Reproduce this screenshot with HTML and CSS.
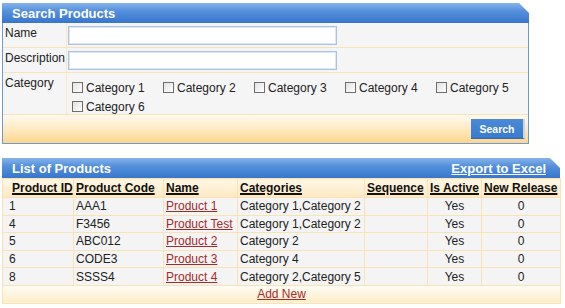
FILE: index.html
```html
<!DOCTYPE html>
<html>
<head>
<meta charset="utf-8">
<link rel="stylesheet" href="styles.css">
</head>
<body>
<div class="page">
  <section class="panel search-panel">
    <div class="panel-head"><span class="title">Search Products</span></div>
    <div class="panel-body">
      <div class="frow row-name">
        <div class="flabel">Name</div>
        <div class="ffield"><span class="tinput"></span></div>
      </div>
      <div class="frow row-desc">
        <div class="flabel">Description</div>
        <div class="ffield"><span class="tinput"></span></div>
      </div>
      <div class="frow row-cat">
        <div class="flabel">Category</div>
        <div class="ffield cats">
          <span class="cat"><span class="box"></span>Category 1</span>
          <span class="cat"><span class="box"></span>Category 2</span>
          <span class="cat"><span class="box"></span>Category 3</span>
          <span class="cat"><span class="box"></span>Category 4</span>
          <span class="cat"><span class="box"></span>Category 5</span>
          <span class="cat"><span class="box"></span>Category 6</span>
        </div>
      </div>
      <div class="ffoot"><span class="btn">Search</span></div>
    </div>
  </section>

  <section class="panel list-panel">
    <div class="panel-head"><span class="title">List of Products</span><a class="export">Export to Excel</a></div>
    <table class="grid">
      <colgroup>
        <col class="c1"><col class="c2"><col class="c3"><col class="c4"><col class="c5"><col class="c6"><col class="c7">
      </colgroup>
      <thead>
        <tr>
          <th>Product ID</th><th>Product Code</th><th>Name</th><th>Categories</th><th>Sequence</th><th>Is Active</th><th>New Release</th>
        </tr>
      </thead>
      <tbody>
        <tr><td>1</td><td>AAA1</td><td><a>Product 1</a></td><td>Category 1,Category 2</td><td></td><td class="ctr">Yes</td><td class="ctr">0</td></tr>
        <tr><td>4</td><td>F3456</td><td><a>Product Test</a></td><td>Category 1,Category 2</td><td></td><td class="ctr">Yes</td><td class="ctr">0</td></tr>
        <tr><td>5</td><td>ABC012</td><td><a>Product 2</a></td><td>Category 2</td><td></td><td class="ctr">Yes</td><td class="ctr">0</td></tr>
        <tr><td>6</td><td>CODE3</td><td><a>Product 3</a></td><td>Category 4</td><td></td><td class="ctr">Yes</td><td class="ctr">0</td></tr>
        <tr><td>8</td><td>SSSS4</td><td><a>Product 4</a></td><td>Category 2,Category 5</td><td></td><td class="ctr">Yes</td><td class="ctr">0</td></tr>
      </tbody>
      <tfoot>
        <tr><td colspan="7" class="addnew"><a>Add New</a></td></tr>
      </tfoot>
    </table>
  </section>
</div>
</body>
</html>
```

FILE: styles.css
```css
* { box-sizing: border-box; }
html, body { margin: 0; padding: 0; background: #fff; }
body {
  font-family: "Liberation Sans", Arial, sans-serif;
  font-size: 12px;
  color: #222;
}
.page { padding: 3px 0 0 2px; }

.panel-head {
  height: 20px;
  display: flex;
  align-items: center;
  justify-content: space-between;
  background: linear-gradient(#86b4ea 0%, #5590dc 40%, #3776cc 100%);
  color: #fff;
  font-weight: bold;
  font-size: 13px;
  clip-path: polygon(0 0, calc(100% - 10px) 0, 100% 10px, 100% 100%, 0 100%);
  padding: 0 14px 0 10px;
}

.search-panel { width: 527px; }
.search-panel .panel-body {
  border: 1px solid #6d9ad6;
  border-top: none;
  background: #f5f5f5;
}
.frow {
  display: flex;
  border-bottom: 1px solid #fbe2b4;
}
.row-name, .row-desc { height: 25px; }
.row-cat { height: 42px; }
.flabel {
  width: 64px;
  padding: 3px 0 0 2px;
  border-right: 1px solid #fbe7c4;
  flex: none;
}
.ffield { flex: 1; padding: 3px 0 0 1px; }
.tinput {
  display: block;
  width: 269px;
  height: 19px;
  background: #fff;
  border: 1px solid #a9c3e0;
  box-shadow: inset 0 0 0 1px #dce8f4;
}
.cats {
  display: flex;
  flex-wrap: wrap;
  padding: 7px 0 0 5px;
  row-gap: 4px;
}
.cat {
  width: 91px;
  display: flex;
  align-items: center;
  height: 15px;
}
.box {
  width: 11px;
  height: 11px;
  border: 1px solid #6e6e6e;
  background: linear-gradient(135deg, #e2e2e2, #fff);
  margin-right: 3px;
  flex: none;
}
.ffoot {
  height: 28px;
  background: linear-gradient(#fffaf0 0%, #fee6b8 60%, #fdd68c 100%);
  display: flex;
  justify-content: flex-end;
  align-items: flex-start;
  padding: 4px 3px 0 0;
}
.btn {
  width: 54px;
  height: 20px;
  display: flex;
  align-items: center;
  justify-content: center;
  background: linear-gradient(#4a8ad8, #3a7acc);
  color: #fff;
  font-weight: bold;
  font-size: 10.5px;
  border-right: 2px solid #c6d6ea;
  border-bottom: 1px solid #2f67b0;
}

.list-panel { width: 558px; margin-top: 14px; }
.export { color: #fff; text-decoration: underline; }

.grid {
  width: 558px;
  border-collapse: collapse;
  table-layout: fixed;
  border: 1px solid #6d9ad6;
  border-top: none;
}
.c1 { width: 71px; }
.c2 { width: 90px; }
.c3 { width: 74px; }
.c4 { width: 127px; }
.c5 { width: 63px; }
.c6 { width: 54px; }
.c7 { width: 79px; }
.grid th, .grid td {
  border: 1px solid #fbe2b4;
  padding: 0 2px;
  white-space: nowrap;
  overflow: hidden;
}
.grid thead th {
  height: 19px;
  text-align: left;
  font-weight: bold;
  color: #111;
  text-decoration: underline;
  text-decoration-thickness: 2px;
  background: linear-gradient(#fff7e6, #fde9c2);
}
.grid thead th:first-child { padding-left: 9px; }
.grid tbody td {
  height: 17.6px;
  background: #f4f4f4;
}
.grid tbody td:first-child { padding-left: 6px; }
.grid td.ctr { text-align: center; }
.grid a { color: #a52a2a; text-decoration: underline; }
.grid tfoot td.addnew {
  height: 18px;
  text-align: center;
  background: linear-gradient(#fffdf6, #fdecc8);
}
```
